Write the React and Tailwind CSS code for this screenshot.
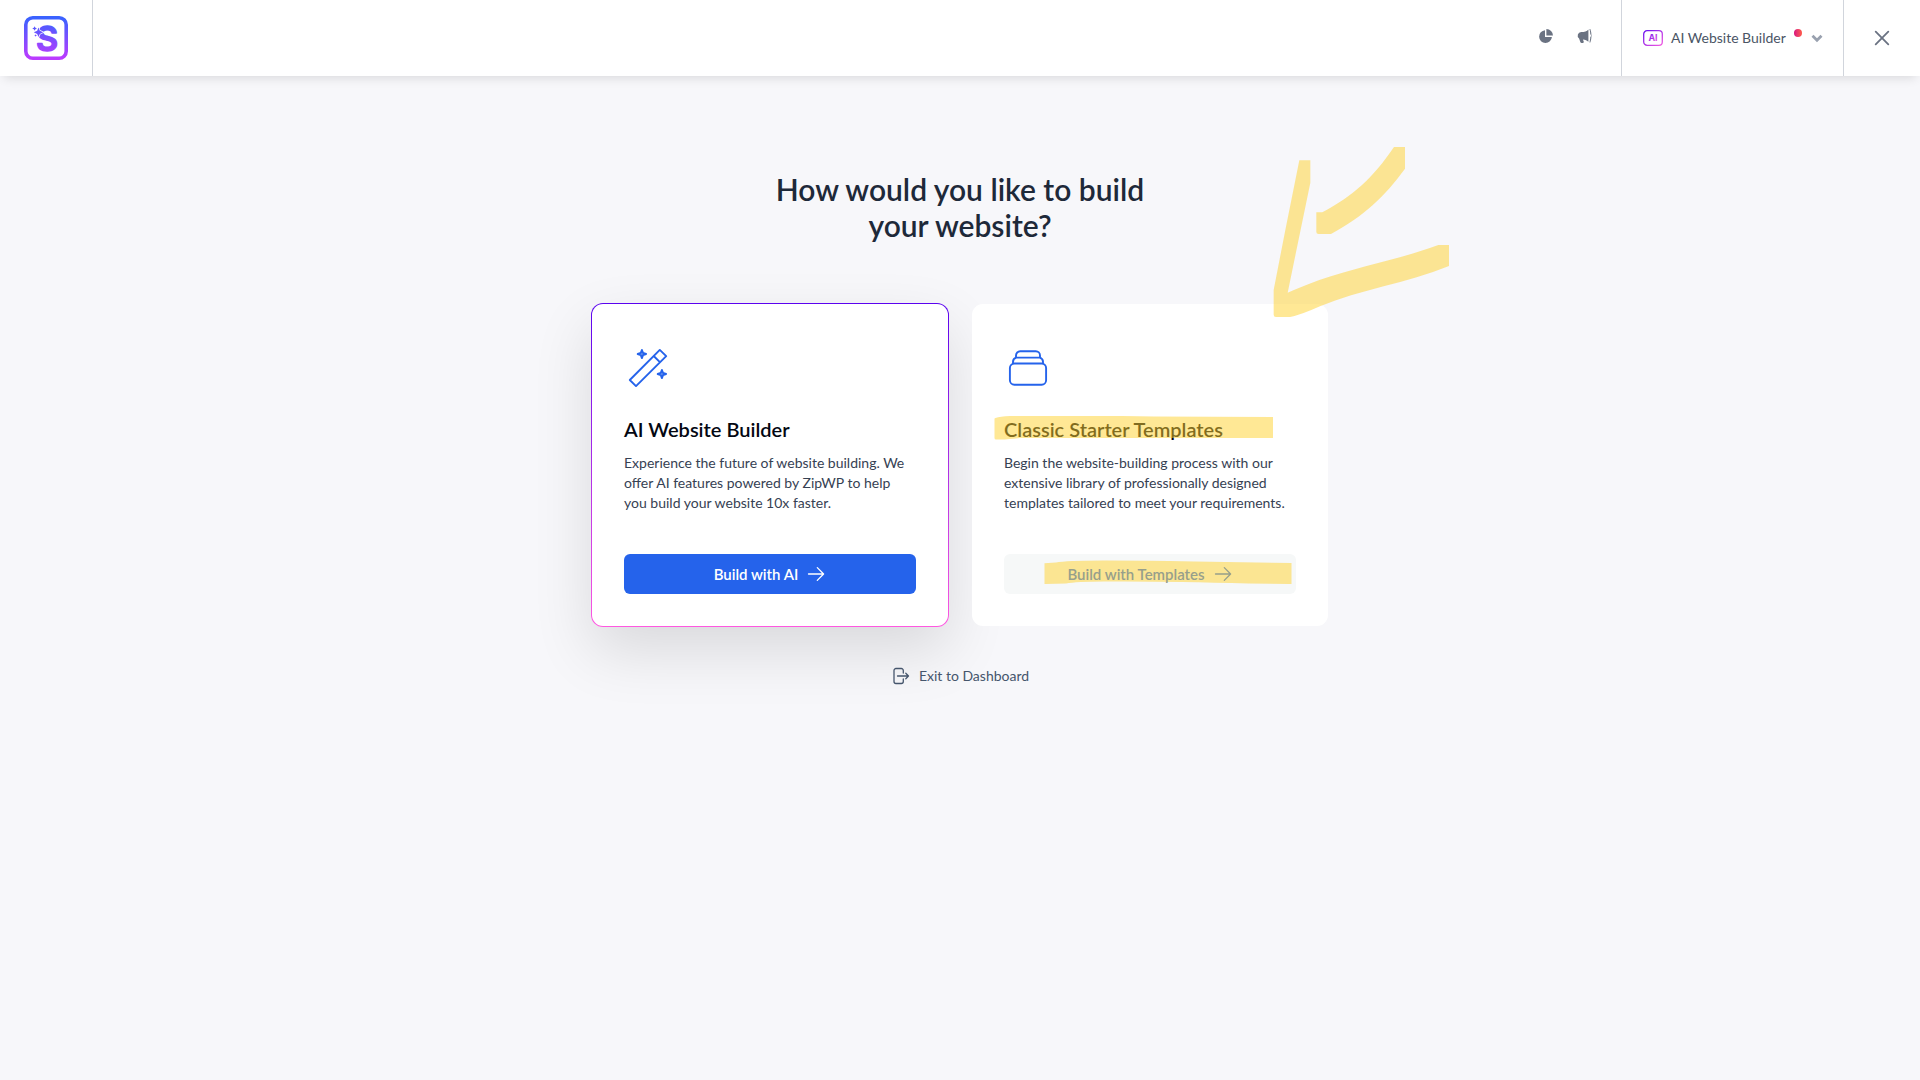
const cards = [
  {
    id: "ai",
    icon: WandIcon,
    title: "AI Website Builder",
    description:
      "Experience the future of website building. We offer AI features powered by ZipWP to help you build your website 10x faster.",
    action: "Build with AI",
    featured: true,
  },
  {
    id: "classic",
    icon: StackIcon,
    title: "Classic Starter Templates",
    description:
      "Begin the website-building process with our extensive library of professionally designed templates tailored to meet your requirements.",
    action: "Build with Templates",
    featured: false,
  },
];

function Logo() {
  return (
    <svg viewBox="0 0 44 44" className="w-11 h-11" role="img" aria-label="Starter Templates">
      <defs>
        <linearGradient id="logo" gradientUnits="userSpaceOnUse" x1="0" y1="2" x2="0" y2="42">
          <stop offset="0" stopColor="#3a62ff" />
          <stop offset="1" stopColor="#bb3bff" />
        </linearGradient>
      </defs>
      <rect x="1.8" y="1.8" width="40.4" height="40.4" rx="7" fill="none" stroke="url(#logo)" strokeWidth="3.6" />
      <text
        x="23"
        y="34.5"
        textAnchor="middle"
        fontFamily="Inter, sans-serif"
        fontWeight="600"
        fontSize="34"
        fill="url(#logo)"
        stroke="url(#logo)"
        strokeWidth="1.4"
        strokeLinejoin="round"
      >
        S
      </text>
      <path
        d="M14.5 11.5l1.3 3.2 3.4 1.6-3.4 1.6-1.3 3.2-1.3-3.2-3.4-1.6 3.4-1.6z"
        fill="url(#logo)"
        stroke="#fff"
        strokeWidth="1.4"
        paintOrder="stroke"
      />
      <path d="M10.6 10.2l.8 1.500 1.600.8-1.600.8-.8 1.500-.8-1.500-1.600-.8 1.600-.8zM11.600 18.200l.4.9.9.4-.9.4-.4.9-.4-.9-.9-.4.9-.4z" fill="url(#logo)" />
    </svg>
  );
}

function PieIcon() {
  return (
    <svg viewBox="0 0 16 16" className="w-4 h-4" fill="currentColor" aria-hidden="true">
      <path d="M7 2.2A6.4 6.4 0 1 0 13.9 9H7z" />
      <path d="M8.4 1v6.6H15A6.6 6.6 0 0 0 8.4 1z" />
    </svg>
  );
}

function MegaphoneIcon() {
  return (
    <svg viewBox="0 0 16 16" className="w-4 h-4" fill="currentColor" aria-hidden="true">
      <path d="M12.4 1.4C10.8 3.2 8.6 4 5.2 4A3.7 3.7 0 0 0 3.1 10.6l1.3 3.6c.2.5.7.8 1.2.8h1.2c.8 0 1.2-.7.9-1.4l-.8-2.2c2.4.2 4.2.9 5.5 2.4z" />
      <path d="M13.5 1h.8c.8 2 1.2 4.3 1.2 6.7s-.4 4.7-1.2 6.7h-.8c.5-2 .8-3.900.8-5.300a1.700 1.700 0 0 0 0-2.800c0-1.800-.3-3.500-.8-5.300z" />
    </svg>
  );
}

function AiBadge() {
  return (
    <svg viewBox="0 0 20 16" className="w-5 h-4" aria-hidden="true">
      <defs>
        <linearGradient id="badge" x1="0" y1="0" x2="1" y2="1">
          <stop offset="0" stopColor="#6a11f0" />
          <stop offset="1" stopColor="#f35be0" />
        </linearGradient>
      </defs>
      <rect x=".7" y=".7" width="18.6" height="14.6" rx="3.4" fill="none" stroke="url(#badge)" strokeWidth="1.3" />
      <text x="10" y="11.3" textAnchor="middle" fontFamily="Inter, sans-serif" fontWeight="700" fontSize="9" fill="url(#badge)">
        AI
      </text>
    </svg>
  );
}

function WandIcon() {
  return (
    <svg viewBox="0 0 48 48" className="w-12 h-12" fill="none" stroke="currentColor" strokeWidth="1.9" strokeLinejoin="round" aria-hidden="true">
      <path d="M35.8 5.9L42.2 12.1 12 42.1 5.8 36zM29.7 12l6.2 6.200" />
      <path
        fill="currentColor"
        fillOpacity="0.6"
        d="M17.900 6l1.100 2.900 3.100 1.100-3.100 1.100-1.100 3-1.100-3L13.700 10l3.100-1.100zM37.900 26l1.100 2.900 3.100 1.100-3.100 1.100-1.100 3-1.100-3-3.100-1.100 3.100-1.100z"
      />
    </svg>
  );
}

function StackIcon() {
  return (
    <svg viewBox="0 0 48 48" className="w-12 h-12" fill="none" stroke="currentColor" strokeWidth="1.9" aria-hidden="true">
      <rect x="5.9" y="19.5" width="36.2" height="21.2" rx="4.5" />
      <path d="M9 20v-2a4.500 4.500 0 0 1 3.200-4.400h23.600A4.500 4.500 0 0 1 39 18v2" />
      <path d="M12 14v-2.500A4.200 4.200 0 0 1 16.200 7.300h15.600A4.200 4.200 0 0 1 36 11.500V14" />
    </svg>
  );
}

function ArrowIcon() {
  return (
    <svg viewBox="0 0 20 20" className="relative w-5 h-5" fill="none" stroke="currentColor" strokeWidth="1.3" strokeLinecap="round" strokeLinejoin="round" aria-hidden="true">
      <path d="M2.500 10h15M11.300 3.600L17.600 10l-6.300 6.400" />
    </svg>
  );
}

function ExitIcon() {
  return (
    <svg viewBox="0 0 20 20" className="w-5 h-5" fill="none" stroke="currentColor" strokeWidth="1.3" strokeLinecap="round" strokeLinejoin="round" aria-hidden="true">
      <path d="M12.300 7V4.500a2 2 0 0 0-2-2H5a2 2 0 0 0-2 2v11a2 2 0 0 0 2 2h5.300a2 2 0 0 0 2-2V13M6.500 10h11M14.800 7.300L17.500 10l-2.700 2.700" />
    </svg>
  );
}

function TitleMarker() {
  return (
    <svg viewBox="0 0 280 24" className="absolute -left-2.5 top-px w-[280px] h-6 max-w-none pointer-events-none fill-[#ffd12b]/50" aria-hidden="true">
      <path d="M1.500 2Q6 .6 16 .1 100-.6 160 .4L279 1V22H30C20 22 14 24 2 23.500Q.5 23.500.5 22V3Q.5 2.200 1.500 2z" />
    </svg>
  );
}

function ButtonMarker() {
  return (
    <svg viewBox="0 0 248 24" className="absolute left-10 top-1.5 w-[248px] h-6 max-w-none pointer-events-none fill-[#ffd12b]/50" aria-hidden="true">
      <path d="M.5 3.200L12 2.500Q22 .5 60 .5T150 1.500L247.500 3V24L205 23.500Q120 21 60 21.500 32 21.500 22 23.500L.5 24z" />
    </svg>
  );
}

function ArrowMarker() {
  return (
    <svg viewBox="0 0 660 600" className="absolute left-[278px] -top-[174px] w-[220px] h-[200px] max-w-none pointer-events-none fill-[#ffd12b]/50" aria-hidden="true">
      <path d="M148 91H181V158L113 488Q150 472 208 450C330 408 450 388 565 345H597V408C470 460 330 478 210 529Q150 556 120 561H78Q71 561 71 554V480L105 305z" />
      <path d="M432 51H465V116C400 204 345 255 243 312H206Q199 312 199 306V247H217C310 198 370 142 432 51z" />
    </svg>
  );
}

function BuilderCard({ card }) {
  const Icon = card.icon;
  return (
    <section
      className={
        card.featured
          ? "relative w-[358px] p-8 pt-10 rounded-xl border border-transparent [background:linear-gradient(#fff,#fff)_padding-box,linear-gradient(#5a03ef,#ff58e0)_border-box] shadow-[0_24px_60px_rgba(0,0,0,0.12)]"
          : "relative w-[358px] p-8 pt-10 rounded-xl border border-transparent bg-white bg-clip-padding"
      }
    >
      <div className="text-[#2563eb]">
        <Icon />
      </div>
      <h2 className="relative mt-[23px] text-xl leading-7 font-semibold text-gray-950">
        {card.title}
        {!card.featured && <TitleMarker />}
      </h2>
      <p className="mt-2.5 text-sm leading-5 text-gray-700">{card.description}</p>
      <button
        type="button"
        className={
          card.featured
            ? "relative mt-[41px] w-full h-10 flex items-center justify-center gap-2 rounded-md text-[15px] font-semibold bg-[#2563eb] text-white"
            : "relative mt-[41px] w-full h-10 flex items-center justify-center gap-2 rounded-md text-[15px] font-semibold bg-[#f6f8f8] text-[#979f8b]"
        }
      >
        {!card.featured && <ButtonMarker />}
        <span className="relative">{card.action}</span>
        <ArrowIcon />
      </button>
      {!card.featured && <ArrowMarker />}
    </section>
  );
}

export default function App() {
  return (
    <div className="min-h-screen bg-[#f7f7fa] font-[Lato,'Open_Sans',sans-serif]">
      <header className="relative flex items-stretch h-19 bg-white shadow-[0_6px_10px_-4px_rgba(0,0,0,0.12)]">
        <div className="flex items-center px-6 border-r border-gray-300">
          <Logo />
        </div>
        <div className="ml-auto flex items-center gap-[22px] pr-[29px] pb-1 text-gray-500">
          <button type="button" aria-label="Usage">
            <PieIcon />
          </button>
          <button type="button" aria-label="What's new">
            <MegaphoneIcon />
          </button>
        </div>
        <button
          type="button"
          className="flex items-center w-[222px] pl-[21px] border-l border-gray-300 text-sm text-gray-600"
        >
          <AiBadge />
          <span className="ml-2">AI Website Builder</span>
          <span className="ml-2 mb-2.5 w-2 h-2 rounded-full bg-gradient-to-r from-[#d8087f] to-[#ff5a46]" />
          <svg viewBox="0 0 12 12" className="ml-auto mr-5 w-3 h-3 text-gray-400" fill="none" stroke="currentColor" strokeWidth="2.8" aria-hidden="true">
            <path d="M1.500 3.700L6 8.200l4.500-4.500" />
          </svg>
        </button>
        <button
          type="button"
          aria-label="Close"
          className="flex items-center justify-center w-[77px] border-l border-gray-300 text-gray-500"
        >
          <svg viewBox="0 0 16 16" className="w-4 h-4" fill="none" stroke="currentColor" strokeWidth="1.8" strokeLinecap="round" aria-hidden="true">
            <path d="M1.700 1.700l12.600 12.600M14.300 1.700L1.700 14.300" />
          </svg>
        </button>
      </header>

      <main className="flex flex-col items-center pt-[95px] pb-16">
        <h1 className="max-w-[400px] text-center text-[30px] leading-9 font-semibold text-gray-800">
          How would you like to build your website?
        </h1>
        <div className="mt-15 flex flex-wrap justify-center gap-[22px]">
          {cards.map((card) => (
            <BuilderCard key={card.id} card={card} />
          ))}
        </div>
        <a href="#dashboard" className="relative mt-[39px] flex items-center gap-2 text-sm leading-5 text-slate-600">
          <ExitIcon />
          Exit to Dashboard
        </a>
      </main>
    </div>
  );
}
